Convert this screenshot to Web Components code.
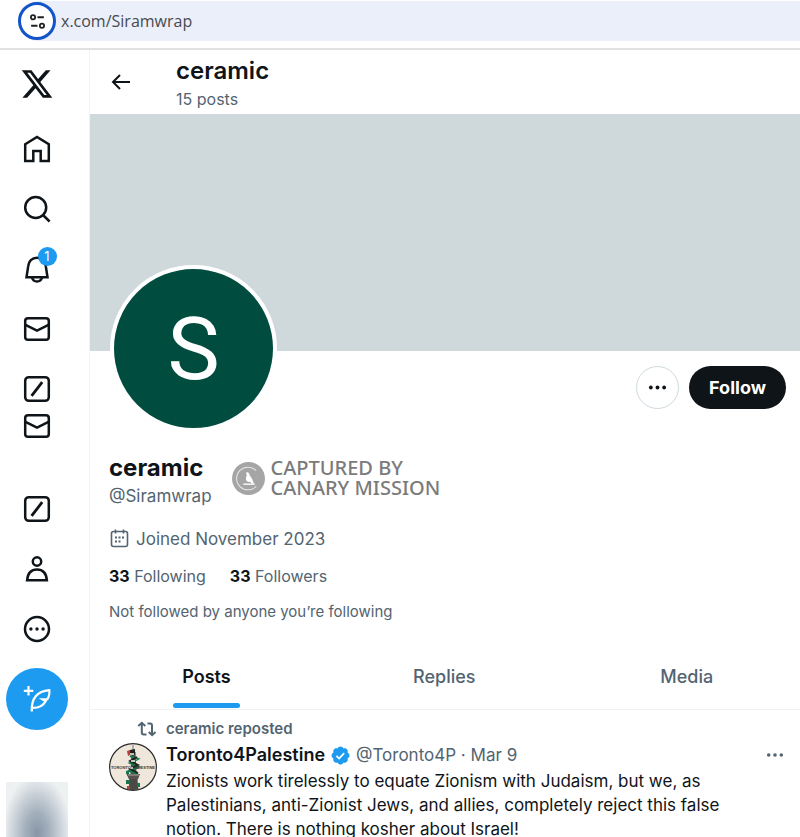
<!DOCTYPE html>
<html lang="en">
<head>
<meta charset="utf-8">
<title>ceramic (@Siramwrap) / X</title>
<style>
html, body { margin: 0; }
body { height: 100vh; overflow: hidden; background: #fff; color: #0f1419; font-family: Inter, "Liberation Sans", sans-serif; font-size: 17px; }
</style>
</head>
<body>
<profile-page></profile-page>
<script>
const define = (name, html) => {
  const t = document.createElement('template');
  t.innerHTML = html;
  customElements.define(name, class extends HTMLElement {
    constructor() {
      super();
      this.attachShadow({ mode: 'open' }).append(t.content.cloneNode(true));
    }
  });
};

const stroke = (body) => `<svg viewBox="0 0 28 28" fill="none" stroke="currentColor" stroke-width="2.5">${body}</svg>`;
const ICONS = {
  x: '<svg viewBox="0 0 24 24" fill="currentColor"><path d="M18.244 2.25h3.308l-7.227 8.26 8.502 11.24H16.17l-5.214-6.817L4.99 21.75H1.68l7.73-8.835L1.254 2.25H8.08l4.713 6.231zm-1.161 17.52h1.833L7.084 4.126H5.117z"/></svg>',
  home: stroke('<path d="M2.200 9.300L14 1.900l11.800 7.400v16.600h-8.100V15.900h-7.400v10H2.200z"/>'),
  search: stroke('<circle cx="12.700" cy="12.500" r="10.500"/><path d="M20 20l6.600 6.500"/>'),
  bell: stroke('<path d="M5.200 11.200C5.500 6.300 9 2.700 14 2.700s8.500 3.600 8.800 8.500l1.700 11H3.500z"/><path d="M8.900 22.500c.8 2.600 2.700 4 5.100 4s4.300-1.400 5.100-4"/>'),
  mail: stroke('<rect x="2.200" y="3.200" width="23.600" height="21.600" rx="2.800"/><path d="M2.500 9.800L14 15.500l11.500-5.700"/>'),
  slash: stroke('<rect x="2.200" y="2.200" width="23.600" height="23.600" rx="3.600"/><path d="M8.600 20.800L19.200 7.200" stroke-width="2.800"/>'),
  person: stroke('<circle cx="14" cy="6.500" r="4.200"/><path d="M4.100 25.300c.6-6.700 4.200-10.700 9.900-10.700s9.300 4 9.900 10.700z"/>'),
  more: stroke('<circle cx="14" cy="14" r="12"/><g fill="currentColor" stroke="none"><circle cx="7.900" cy="14" r="1.700"/><circle cx="14" cy="14" r="1.700"/><circle cx="20.100" cy="14" r="1.700"/></g>'),
  compose: '<svg viewBox="0 0 28 28" fill="none" stroke="currentColor" stroke-width="2.200"><path d="M5.500 1v9.500M.8 5.800h9.500"/><path d="M8.800 26.500c-.4-9 2-20 17.500-21.300.4 4-.3 6.800-2 9.200h-4.700l3 1.800c-2.300 4.500-6 6.600-12.600 6.600"/></svg>',
  back: '<svg viewBox="0 0 20 20" fill="none" stroke="currentColor" stroke-width="2"><path d="M19 10H2.500M9 3l-7 7 7 7"/></svg>',
  dots: '<svg viewBox="0 0 20 20" fill="currentColor"><circle cx="3" cy="10" r="2"/><circle cx="10" cy="10" r="2"/><circle cx="17" cy="10" r="2"/></svg>',
  tune: '<svg viewBox="0 0 16 16" fill="none" stroke="currentColor" stroke-width="1.700"><circle cx="3.800" cy="4" r="2"/><path d="M8 4h6M2 12h6"/><circle cx="12.200" cy="12" r="2"/></svg>',
  calendar: '<svg viewBox="0 0 20 20" fill="none" stroke="currentColor" stroke-width="1.600"><rect x="2.500" y="2.500" width="16" height="15" rx="2"/><path d="M6.500 .5v4M14.500 .5v4"/><path d="M6 8.500h2M9.500 8.500h2M13 8.500h2M6 12.500h2M9.500 12.500h2" stroke-width="2"/></svg>',
  repost: '<svg viewBox="0 0 20 20" fill="none" stroke="currentColor" stroke-width="2"><path d="M1.300 7L4.800 3.800 8.300 7M4.800 4v9.500c0 1.200.8 2 2 2h2.700M10.500 4.500H13c1.200 0 2 .8 2 2V16M11.700 13l3.400 3.200 3.400-3.200"/></svg>',
  verified: '<svg viewBox="0 0 22 22"><path fill="#1d9bf0" d="M20.396 11c-.018-.646-.215-1.275-.57-1.816-.354-.54-.852-.972-1.438-1.246.223-.607.270-1.264.140-1.897-.131-.634-.437-1.218-.882-1.687-.470-.445-1.053-.750-1.687-.882-.633-.130-1.290-.083-1.897.140-.273-.587-.704-1.086-1.245-1.440S11.647 1.620 11 1.604c-.646.017-1.273.213-1.813.568s-.969.854-1.240 1.440c-.608-.223-1.267-.272-1.902-.140-.635.130-1.220.436-1.690.882-.445.470-.749 1.055-.878 1.688-.130.633-.080 1.290.144 1.896-.587.274-1.087.705-1.443 1.245-.356.540-.555 1.170-.574 1.817.020.647.218 1.276.574 1.817.356.540.856.972 1.443 1.245-.224.606-.274 1.263-.144 1.896.130.634.433 1.218.877 1.688.470.443 1.054.747 1.687.878.633.132 1.290.084 1.897-.136.274.586.705 1.084 1.246 1.439.540.354 1.170.551 1.816.569.647-.016 1.276-.213 1.817-.567s.972-.854 1.245-1.440c.604.239 1.266.296 1.903.164.636-.132 1.220-.447 1.680-.907.460-.460.776-1.044.908-1.681s.075-1.299-.165-1.903c.586-.274 1.084-.705 1.439-1.246.354-.540.551-1.170.569-1.816z"/><path d="M6.700 11.300l2.900 2.900 5.200-5.700" fill="none" stroke="#fff" stroke-width="1.900"/></svg>',
  canary: '<svg viewBox="0 0 32 32"><circle cx="16" cy="16" r="16" fill="#a5a5a5"/><path d="M23.500 8.500A11 11 0 1 0 23.500 23.500" fill="none" stroke="#e8e8e8" stroke-width="1"/><path d="M13.500 10.500c1.300-1.200 3-.5 3.200 1.200.2 1.500 1.600 2.600 2.600 4.200l2 5h-2.500l-1-1.500c-3 .3-4.700-1.300-4.300-3.900l.8-3z" fill="#fff"/><path d="M11 21.500h11" stroke="#fff" stroke-width="1.300"/></svg>',
  tower: `<svg viewBox="0 0 48 48"><circle cx="24" cy="24" r="23.400" fill="#efe7dc" stroke="#2c2b29" stroke-width="1.200"/>
<path d="M24 2v8" stroke="#777" stroke-width="1"/><path d="M22.500 9h4l1 22h3l-2 6 1 10h-10l1-10-3-6h4z" fill="#4a4945"/>
<path d="M18 8l3-1v5l-2 1z" fill="#c33b35"/><path d="M21 7l5-1v5l-5 1z" fill="#22211f"/><path d="M21 13l8 3-8 4 9 4-10 4 9 3" fill="none" stroke="#16794e" stroke-width="2"/><path d="M28 14l-7 4 8 4-8 4 8 4" fill="none" stroke="#22211f" stroke-width="1.800"/><path d="M21 11h4M22 18h4M21 25h3" stroke="#f4f1ea" stroke-width="1.300"/>
<path d="M18 31h13l-2 5h-9z" fill="#55534f"/><path d="M19 32h11" stroke="#aaa49b"/><path d="M17 37h4v4h-4zM28 40h3v4h-3zM17 28h3v3h-3z" fill="#16794e"/><path d="M18 43h3v3h-3z" fill="#b6403a"/></svg>`
};

customElements.define('ui-icon', class extends HTMLElement {
  connectedCallback() {
    const root = this.shadowRoot || this.attachShadow({ mode: 'open' });
    root.innerHTML = `<style>:host{display:inline-flex;flex:none;width:var(--size,28px);height:var(--size,28px)}svg{width:100%;height:100%;display:block}</style>${ICONS[this.getAttribute('name')]}`;
  }
});

define('address-bar', `<style>
:host { display: block; padding: 1px 0 7px; border-bottom: 2px solid #e0e1e2; }
form { display: flex; align-items: center; gap: 5px; height: 40px; margin-left: 18px; background: #ebeffa; border-radius: 20px 0 0 20px; }
button { flex: none; display: grid; place-items: center; box-sizing: border-box; width: 38px; height: 38px; padding: 0; border: 3px solid #1155c8; border-radius: 50%; background: #fff; color: #202124; }
ui-icon { --size: 17px; }
input { flex: 1; min-width: 0; padding: 0; border: 0; background: none; color: #474a4f; font: 16px "Open Sans", "Noto Sans", sans-serif; }
</style>
<form><button type="button" aria-label="View site information"><ui-icon name="tune"></ui-icon></button><input aria-label="Address" value="x.com/Siramwrap"></form>`);

define('side-nav', `<style>
:host { display: flex; flex-direction: column; align-items: center; box-sizing: border-box; width: 90px; padding: 17px 16px 0 0; border-right: 1px solid #eff3f4; }
.logo { --size: 34px; height: 34px; }
nav { display: flex; flex-direction: column; gap: 32px; margin-top: 34px; }
a { display: block; height: 28px; color: #0f1419; }
.pair { display: flex; flex-direction: column; gap: 9px; margin-bottom: 23px; }
.alerts { position: relative; }
.badge { position: absolute; top: -8px; right: -6px; width: 19px; height: 19px; border-radius: 50%; background: #1d9bf0; color: #fff; font-size: 13px; line-height: 19px; text-align: center; }
button { display: grid; place-items: center; width: 62px; height: 62px; margin: 25px 0 52px; padding: 0; border: 0; border-radius: 50%; background: #1d9bf0; color: #fff; }
.account { width: 62px; height: 60px; background: radial-gradient(ellipse 34px 58px at 50% 85%, #8796a6, #a3b0bc 35%, #dde2e6 85%, #eef1f2); }
</style>
<a class="logo" href="#" aria-label="X"><ui-icon name="x"></ui-icon></a>
<nav>
<a href="#" aria-label="Home"><ui-icon name="home"></ui-icon></a>
<a href="#" aria-label="Explore"><ui-icon name="search"></ui-icon></a>
<a href="#" aria-label="Notifications" class="alerts"><ui-icon name="bell"></ui-icon><span class="badge">1</span></a>
<a href="#" aria-label="Messages"><ui-icon name="mail"></ui-icon></a>
<div class="pair"><a href="#" aria-label="Grok"><ui-icon name="slash"></ui-icon></a><a href="#" aria-label="Messages"><ui-icon name="mail"></ui-icon></a></div>
<a href="#" aria-label="Grok"><ui-icon name="slash"></ui-icon></a>
<a href="#" aria-label="Profile"><ui-icon name="person"></ui-icon></a>
<a href="#" aria-label="More"><ui-icon name="more"></ui-icon></a>
</nav>
<button aria-label="Compose post"><ui-icon name="compose"></ui-icon></button>
<div class="account"></div>`);

define('profile-header', `<style>
:host { display: flex; align-items: center; gap: 45px; height: 64px; padding-left: 21px; }
button { display: grid; padding: 0; border: 0; background: none; color: inherit; --size: 20px; }
.title { padding-top: 4px; }
h1 { margin: 0; font-size: 24px; font-weight: 600; line-height: 30px; }
p { margin: 0; color: #536471; font-size: 16px; line-height: 26px; }
</style>
<button aria-label="Back"><ui-icon name="back"></ui-icon></button><div class="title"><h1><slot name="name"></slot></h1><p><slot name="count"></slot></p></div>`);

define('profile-card', `<style>
:host { display: block; }
.banner { height: 237px; background: #cfd9dc; }
.row { display: flex; justify-content: space-between; align-items: flex-start; padding: 0 14px 0 20px; }
.avatar { display: grid; place-items: center; width: 159px; height: 159px; margin-top: -86px; border: 4px solid #fff; border-radius: 50%; background: #004d40; color: #fff; font: 88px Roboto, sans-serif; }
.actions { display: flex; gap: 10px; margin-top: 15px; }
button { height: 43px; padding: 0 20px; border: 0; border-radius: 22px; background: #0f1419; color: #fff; font: 700 18px Inter, sans-serif; }
.more { display: grid; place-items: center; width: 43px; padding: 0; border: 1px solid #cfd9de; background: #fff; color: #0f1419; --size: 19px; }
.info { padding: 0 19px; color: #536471; }
.identity { display: flex; align-items: center; gap: 20px; margin-top: 21px; }
h2 { margin: 0; color: #0f1419; font-size: 24px; line-height: 30px; }
p { margin: 0; line-height: 26px; }
.stamp { display: flex; align-items: center; gap: 6px; padding-bottom: 6px; color: #7b7b7b; font: 500 20px/20px "Noto Sans", "Open Sans", sans-serif; --size: 33px; }
.joined { display: flex; align-items: center; gap: 7px; margin-top: 17px; --size: 20px; }
.counts { display: flex; gap: 24px; margin-top: 11px; font-size: 16px; line-height: 26px; }
a { color: inherit; text-decoration: none; }
b { color: #0f1419; }
.note { margin-top: 10px; font-size: 15px; }
</style>
<div class="banner"></div>
<div class="row"><div class="avatar">S</div><div class="actions"><button class="more" aria-label="More"><ui-icon name="dots"></ui-icon></button><button>Follow</button></div></div>
<div class="info">
<div class="identity"><div><h2>ceramic</h2><p>@Siramwrap</p></div><div class="stamp"><ui-icon name="canary"></ui-icon><span>CAPTURED BY<br>CANARY MISSION</span></div></div>
<p class="joined"><ui-icon name="calendar"></ui-icon>Joined November 2023</p>
<div class="counts"><a href="#"><b>33</b> Following</a><a href="#"><b>33</b> Followers</a></div>
<p class="note">Not followed by anyone you’re following</p>
</div>`);

define('profile-tabs', `<style>
:host { display: grid; grid-template-columns: 233px 1fr 1fr; height: 64px; margin: 20px -8px 0 0; border-bottom: 1px solid #eff3f4; }
a { display: flex; justify-content: center; color: #536471; font-size: 18px; font-weight: 500; text-decoration: none; }
span { display: grid; grid-template-rows: 1fr 5px; align-items: center; padding: 5px 9px 1px; }
a[aria-current] { color: #0f1419; font-weight: 600; }
a[aria-current] span::after { content: ""; height: 5px; margin: 0 -9px; border-radius: 3px; background: #1d9bf0; }
</style>
<a href="#" aria-current="page"><span>Posts</span></a><a href="#"><span>Replies</span></a><a href="#"><span>Media</span></a>`);

define('feed-post', `<style>
:host { display: grid; grid-template-columns: 48px 1fr; column-gap: 9px; padding: 7px 16px 0 19px; }
.why-icon { justify-self: end; --size: 20px; height: 24px; display: flex; align-items: center; color: #536471; }
.why { color: #536471; font-size: 15px; font-weight: 600; line-height: 24px; }
.avatar { --size: 48px; position: relative; margin-top: 2px; height: 48px; }
.avatar span { position: absolute; inset: 22px 0 auto; display: flex; justify-content: space-between; padding: 0 2px; font: 700 4px/5px "Liberation Sans", sans-serif; color: #3b3937; }
small { font-size: inherit; }
.by { display: flex; align-items: center; gap: 5px; line-height: 28px; color: #536471; }
b { color: #0f1419; font-size: 18px; font-weight: 600; }
.by ui-icon { --size: 21px; }
button { display: grid; margin-left: auto; padding: 0; border: 0; background: none; color: #536471; }
.by button ui-icon { --size: 18px; }
p { margin: 0; line-height: 24px; }
</style>
<div class="why-icon"><ui-icon name="repost"></ui-icon></div><div class="why"><slot name="context"></slot></div>
<div class="avatar"><ui-icon name="tower"></ui-icon><span><small>TORONTO</small><small>ALESTINE</small></span></div>
<article><div class="by"><b><slot name="author"></slot></b><ui-icon name="verified"></ui-icon><span><slot name="meta"></slot></span><button aria-label="More"><ui-icon name="dots"></ui-icon></button></div><p><slot></slot></p></article>`);

define('profile-page', `<style>
:host { display: block; }
.layout { display: grid; grid-template-columns: 90px minmax(0, 1fr); }
</style>
<address-bar></address-bar>
<div class="layout"><side-nav></side-nav><main>
<profile-header><span slot="name">ceramic</span><span slot="count">15 posts</span></profile-header>
<profile-card></profile-card>
<profile-tabs></profile-tabs>
<feed-post><span slot="context">ceramic reposted</span><span slot="author">Toronto4Palestine</span><span slot="meta">@Toronto4P · Mar 9</span>Zionists work tirelessly to equate Zionism with Judaism, but we, as<br>Palestinians, anti-Zionist Jews, and allies, completely reject this false<br>notion. There is nothing kosher about Israel!</feed-post>
</main></div>`);
</script>
</body>
</html>
